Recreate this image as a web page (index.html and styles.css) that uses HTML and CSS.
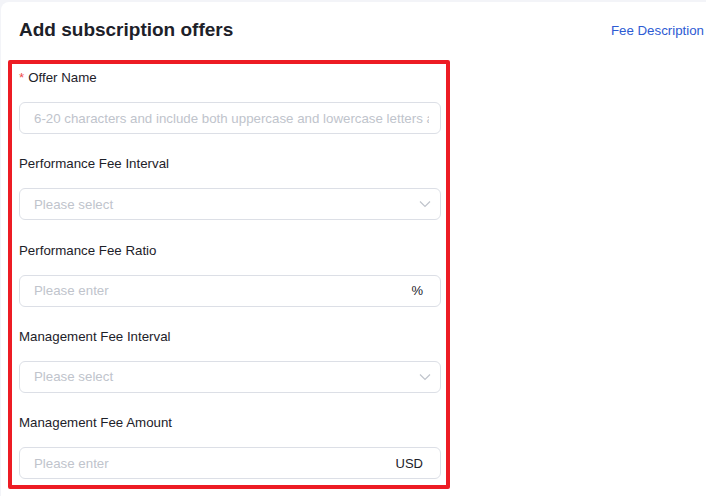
FILE: index.html
```html
<!DOCTYPE html>
<html lang="en">
<head>
<meta charset="utf-8">
<title>Add subscription offers</title>
<link rel="stylesheet" href="styles.css">
</head>
<body>
<div class="page">
  <div class="card">
    <div class="header">
      <h1 class="title">Add subscription offers</h1>
      <a class="link" href="#">Fee Description</a>
    </div>
    <form class="form">
      <div class="item">
        <label class="label"><span class="req">*</span>Offer Name</label>
        <div class="input"><span class="ph">6-20 characters and include both uppercase and lowercase letters and numbers</span></div>
      </div>
      <div class="item">
        <label class="label">Performance Fee Interval</label>
        <div class="input"><span class="ph">Please select</span>
          <svg class="chev" width="12" height="8" viewBox="0 0 12 8"><path d="M1 1.5l5 5 5-5" fill="none" stroke="#c0c4cc" stroke-width="1.2"/></svg>
        </div>
      </div>
      <div class="item">
        <label class="label">Performance Fee Ratio</label>
        <div class="input"><span class="ph">Please enter</span><span class="suffix">%</span></div>
      </div>
      <div class="item">
        <label class="label">Management Fee Interval</label>
        <div class="input"><span class="ph">Please select</span>
          <svg class="chev" width="12" height="8" viewBox="0 0 12 8"><path d="M1 1.5l5 5 5-5" fill="none" stroke="#c0c4cc" stroke-width="1.2"/></svg>
        </div>
      </div>
      <div class="item last">
        <label class="label">Management Fee Amount</label>
        <div class="input"><span class="ph">Please enter</span><span class="suffix">USD</span></div>
      </div>
    </form>
  </div>
</div>
</body>
</html>
```
FILE: styles.css
```css
html, body {
  margin: 0;
  padding: 0;
  background: #f3f4f8;
  font-family: "Liberation Sans", Arial, sans-serif;
}
.page {
  padding: 2px 0 0 1px;
  height: 494px;
  overflow: hidden;
}
.card {
  background: #fff;
  border-top-left-radius: 8px;
  min-height: 494px;
  padding: 0 0 0 7px;
}
.header {
  display: flex;
  justify-content: space-between;
  align-items: center;
  height: 56px;
  padding-left: 11px;
  padding-right: 2px;
}
.title {
  margin: 0;
  font-size: 19px;
  font-weight: bold;
  color: #1d2129;
}
.link {
  font-size: 13.3px;
  color: #2d5bd3;
  text-decoration: none;
  margin-top: 1px;
}
.form {
  box-sizing: border-box;
  width: 442px;
  border: 4px solid #ed1c24;
  border-radius: 2px;
  margin-top: 2px;
  padding: 4px 5px 6px 7px;
}
.item {
  display: flex;
  flex-direction: column;
  margin-bottom: 20.3px;
}
.item.last {
  margin-bottom: 0;
}
.label {
  font-size: 13.3px;
  line-height: 20px;
  color: #1d2129;
  margin-bottom: 14px;
}
.req {
  color: #f04b4b;
  margin-right: 4px;
}
.input {
  box-sizing: border-box;
  height: 32px;
  border: 1px solid #dcdfe6;
  border-radius: 6px;
  display: flex;
  align-items: center;
  padding: 0 9px 0 14px;
  font-size: 13.3px;
}
.ph {
  flex: 1;
  color: #c0c4cc;
  white-space: nowrap;
  overflow: hidden;
  margin-right: 2px;
}
.suffix {
  color: #1d2129;
  font-size: 13px;
  margin-left: 8px;
  margin-right: 8px;
}
.chev {
  margin-left: 8px;
}
```
